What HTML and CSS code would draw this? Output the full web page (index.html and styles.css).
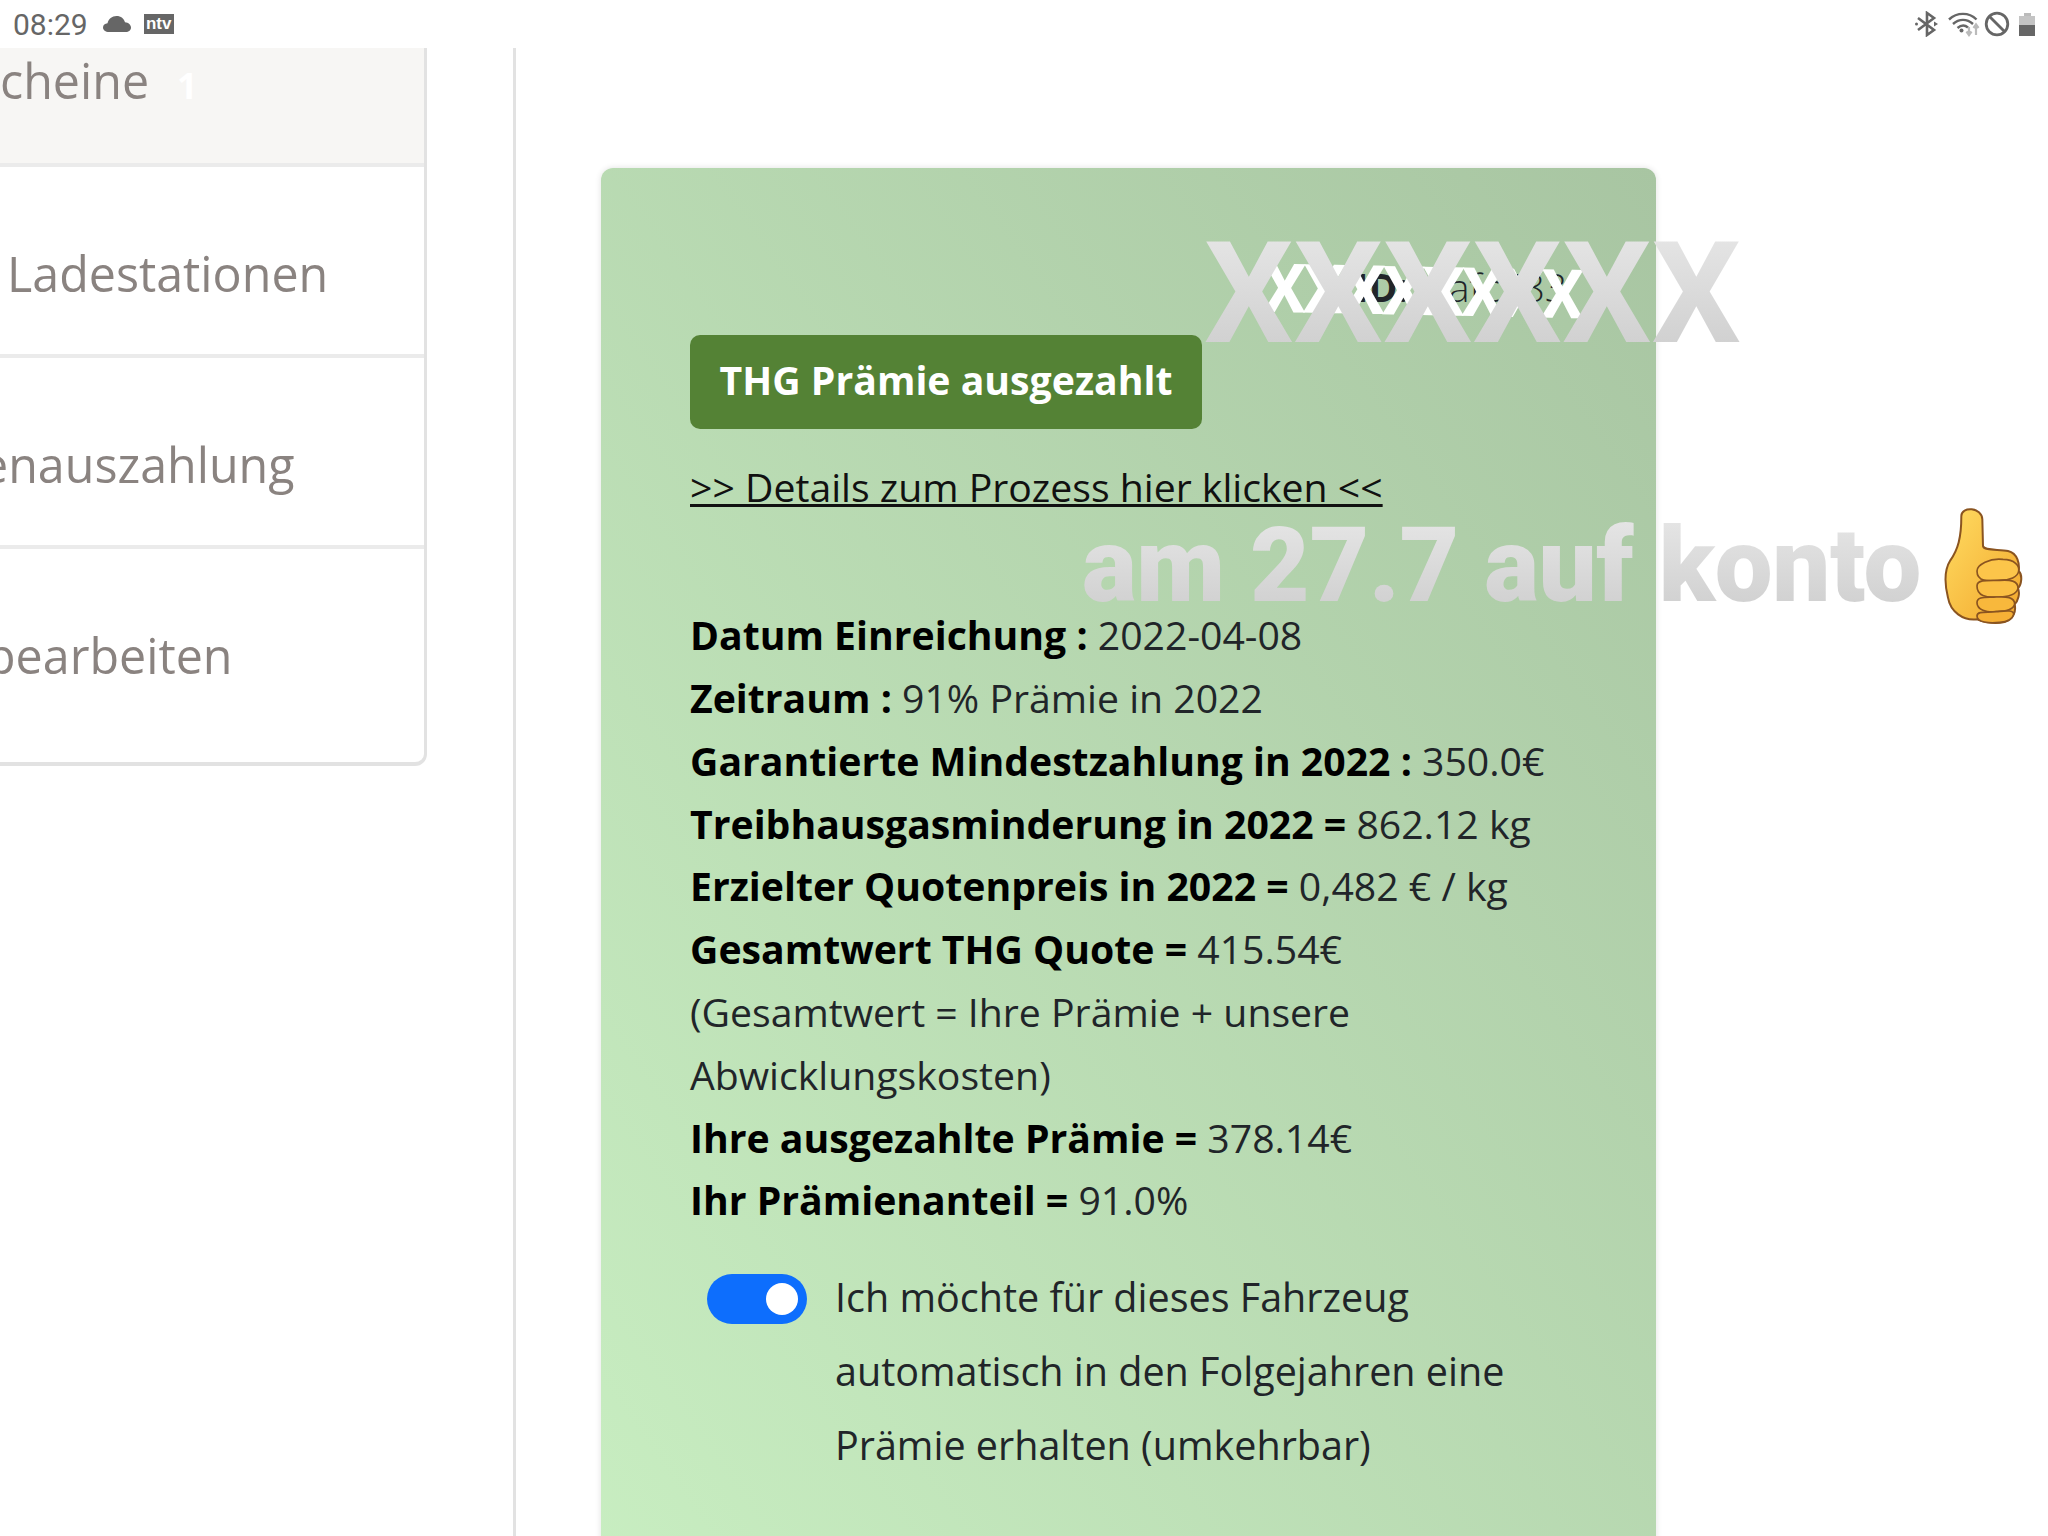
FILE: index.html
```html
<!DOCTYPE html>
<html>
<head>
    <title>THG Prämie</title>
    <link rel="stylesheet" href="styles.css">
</head>
<body>
    <div class="status-bar">
        <div class="status-left">
            <span class="clock">08:29</span>
            <svg class="cloud-icon" viewBox="0 0 28 16"><path d="M6 16C2.500 16 0 14 0 11.500S2 7.500 4.500 7.300C5.500 3 9 0 13.500 0 18 0 21 2.500 22 6.300 25.500 6.600 28 9 28 11.500S26 16 22.500 16Z"/></svg>
            <span class="ntv-badge">ntv</span>
        </div>
        <div class="status-right">
            <svg class="bt-icon" viewBox="0 0 24 26"><path d="M3 7 L19 19 L12 24 V2 L19 7 L3 19" fill="none" stroke="#666" stroke-width="2.600"/><circle cx="1.500" cy="13" r="1.500" fill="#666"/><path d="M19 10.500 L23 13 L19 15.500Z" fill="#666"/></svg>
            <svg class="wifi-icon" viewBox="0 0 32 26">
                <path d="M1 8.500C9 1 21 1 28.500 8.500M5 13C11 7.500 19 7.500 25 13M9.500 17C13 14 17 14 20 16.500" fill="none" stroke="#666" stroke-width="2.400"/>
                <circle cx="13.500" cy="19.500" r="2" fill="#666"/>
                <path d="M21 16V23M18.500 20.500L21 24L23.500 20.500M28 24V14M25.500 17L28 13.500L30.500 17" fill="none" stroke="#bbb" stroke-width="2.200"/>
            </svg>
            <svg class="dnd-icon" viewBox="0 0 26 26"><circle cx="13" cy="13" r="10.800" fill="none" stroke="#666" stroke-width="2.800"/><path d="M5.500 5.500L20.500 20.500" stroke="#666" stroke-width="2.800"/></svg>
            <div class="battery"><div class="battery-cap"></div><div class="battery-body"><div class="battery-level"></div></div></div>
        </div>
    </div>

    <div class="main">
        <div class="side-list">
            <div class="side-item side-item-active"><span class="side-text">cheine</span><span class="side-count">1</span></div>
            <div class="side-item"><span class="side-text side-text-in">Ladestationen</span></div>
            <div class="side-item"><span class="side-text side-text-out">enauszahlung</span></div>
            <div class="side-item side-item-last"><span class="side-text side-text-far">bearbeiten</span></div>
        </div>

        <div class="content">
            <div class="card">
                <div class="card-id"><b>ID:</b> afc583</div>
                <div class="sticker-small">XXXXXXXX</div>
                <div class="sticker-big">XXXXXX</div>

                <div class="status-btn">THG Prämie ausgezahlt</div>
                <a class="details-link" href="#">&gt;&gt; Details zum Prozess hier klicken &lt;&lt;</a>

                <div class="sticker-note">
                    <span class="sticker-note-text">am 27.7 auf konto</span>
                    <svg class="thumb" viewBox="70 45 240 360">
                        <defs>
                            <linearGradient id="thumbFill" x1="0" y1="0" x2="1" y2="1">
                                <stop offset="0" stop-color="#ffdc62"/>
                                <stop offset="1" stop-color="#f2a62b"/>
                            </linearGradient>
                        </defs>
                        <path d="M125 75C125 45 187 48 188 85L190 165C192 180 240 174 265 180 295 187 300 220 297 240 310 252 305 282 295 292 302 308 295 330 285 340 290 362 280 385 258 392 230 400 200 396 172 385 130 390 92 362 85 320 75 280 72 240 92 208 115 175 125 140 125 75Z" fill="url(#thumbFill)" stroke="#8a5420" stroke-width="6"/>
                        <path d="M172 240C172 222 210 200 250 205 285 205 300 225 297 240 295 258 270 268 240 268 210 270 172 275 172 240Z" fill="#fcc54a" stroke="#8a5420" stroke-width="5"/>
                        <path d="M172 285C172 265 205 268 240 268 270 266 296 268 295 292 290 312 260 318 230 318 200 320 172 315 172 285Z" fill="#fbc044" stroke="#8a5420" stroke-width="5"/>
                        <path d="M172 335C172 315 200 320 230 318 260 316 285 318 285 340 280 358 255 362 230 362 200 366 172 355 172 335Z" fill="#f8b83c" stroke="#8a5420" stroke-width="5"/>
                        <path d="M172 375C172 358 205 366 230 362 255 360 282 355 282 370 278 388 258 392 240 394 210 397 172 395 172 375Z" fill="#f6b036" stroke="#8a5420" stroke-width="5"/>
                    </svg>
                </div>

                <div class="details">
                    <div class="detail-row"><b>Datum Einreichung :</b> 2022-04-08</div>
                    <div class="detail-row"><b>Zeitraum :</b> 91% Prämie in 2022</div>
                    <div class="detail-row"><b>Garantierte Mindestzahlung in 2022 :</b> 350.0€</div>
                    <div class="detail-row"><b>Treibhausgasminderung in 2022 =</b> 862.12 kg</div>
                    <div class="detail-row"><b>Erzielter Quotenpreis in 2022 =</b> 0,482 € / kg</div>
                    <div class="detail-row"><b>Gesamtwert THG Quote =</b> 415.54€</div>
                    <div class="detail-row detail-note">(Gesamtwert = Ihre Prämie + unsere Abwicklungskosten)</div>
                    <div class="detail-row"><b>Ihre ausgezahlte Prämie =</b> 378.14€</div>
                    <div class="detail-row"><b>Ihr Prämienanteil =</b> 91.0%</div>
                </div>

                <div class="renew-row">
                    <div class="switch"><div class="switch-knob"></div></div>
                    <div class="renew-text">Ich möchte für dieses Fahrzeug automatisch in den Folgejahren eine Prämie erhalten (umkehrbar)</div>
                </div>
            </div>
        </div>
    </div>
</body>
</html>
```
FILE: styles.css
```css
body {
    margin: 0;
    width: 2048px;
    height: 1536px;
    overflow: hidden;
    background-color: white;
    font-family: "Open Sans", sans-serif;
    color: #212529;
}
.status-bar {
    height: 48px;
    display: flex;
    justify-content: space-between;
    align-items: center;
    padding: 0 13px;
    box-sizing: border-box;
}
.status-left, .status-right {
    display: flex;
    align-items: center;
}
.clock {
    font-family: Roboto, sans-serif;
    font-size: 30px;
    color: #666;
    margin-right: 15px;
}
.cloud-icon {
    width: 28px;
    height: 16px;
    fill: #666;
    margin-right: 13px;
}
.ntv-badge {
    width: 30px;
    height: 20px;
    background-color: #666;
    color: white;
    font-family: "Liberation Sans", sans-serif;
    font-weight: bold;
    font-size: 17px;
    line-height: 19px;
    text-align: center;
}
.bt-icon {
    width: 24px;
    height: 26px;
    margin-right: 9px;
}
.wifi-icon {
    width: 32px;
    height: 26px;
    margin-right: 4px;
}
.dnd-icon {
    width: 26px;
    height: 26px;
    margin-right: 9px;
}
.battery {
    width: 16px;
    display: flex;
    flex-direction: column;
    align-items: center;
}
.battery-cap {
    width: 7px;
    height: 3px;
    background-color: #bbb;
}
.battery-body {
    width: 16px;
    height: 20px;
    background-color: #c4c4c4;
    display: flex;
    align-items: flex-end;
}
.battery-level {
    width: 100%;
    height: 11px;
    background-color: #666;
}
.main {
    display: flex;
    height: 1488px;
}
.side-list {
    width: 427px;
    height: 718px;
    box-sizing: border-box;
    border-right: 3px solid #e2e2e2;
    border-bottom: 4px solid #e2e2e2;
    border-bottom-right-radius: 12px;
    overflow: hidden;
    flex-shrink: 0;
}
.side-item {
    height: 191px;
    box-sizing: border-box;
    border-bottom: 4px solid #ebebeb;
    padding-top: 73px;
    font-size: 48.400px;
    line-height: 66px;
    color: #8a8380;
    white-space: nowrap;
}
.side-item-active {
    height: 119px;
    padding-top: 0;
    line-height: 64px;
    background-color: #f7f6f4;
}
.side-item-last {
    border-bottom: none;
    height: 215px;
}
.side-text {
    display: inline-block;
}
.side-text-in {
    margin-left: 7px;
}
.side-text-out {
    margin-left: -19px;
}
.side-text-far {
    margin-left: -14px;
}
.side-count {
    color: white;
    font-weight: bold;
    font-size: 36px;
    margin-left: 28px;
}
.content {
    margin-left: 86px;
    padding-left: 85px;
    border-left: 3px solid #e2e2e2;
    flex: 1;
}
.card {
    position: relative;
    width: 1055px;
    height: 1500px;
    margin-top: 120px;
    box-sizing: border-box;
    padding: 88px 89px 0;
    border-radius: 12px;
    background: linear-gradient(to bottom left, #a8c5a2, #c9efc2);
    box-shadow: 0 0 6px rgba(0,0,0,0.12);
    font-size: 39.200px;
    line-height: 62.800px;
}
.card-id {
    height: 79px;
    text-align: right;
    font-weight: 300;
}
.card-id b {
    font-weight: bold;
    margin-right: 30px;
}
.sticker-small {
    position: absolute;
    left: 662px;
    top: 84px;
    font-family: Roboto, sans-serif;
    font-weight: bold;
    font-size: 68px;
    line-height: 80px;
    color: white;
    letter-spacing: -3.500px;
    white-space: nowrap;
    transform: rotate(1.200deg);
}
.sticker-big, .sticker-note-text {
    font-family: Roboto, sans-serif;
    font-weight: 900;
    color: transparent;
    background: linear-gradient(#e8e8e8, #cccccc);
    -webkit-background-clip: text;
    background-clip: text;
    white-space: nowrap;
}
.sticker-big {
    position: absolute;
    left: 603px;
    top: 51px;
    font-weight: 700;
    font-size: 141px;
    line-height: 150px;
}
.status-btn {
    width: 512px;
    height: 94px;
    box-sizing: border-box;
    border-radius: 10px;
    background-color: #548235;
    color: white;
    font-weight: bold;
    text-align: center;
    line-height: 90px;
}
.details-link {
    display: block;
    margin-top: 27px;
    color: #111;
    text-decoration: underline;
}
.sticker-note {
    position: absolute;
    left: 481px;
    top: 338px;
    display: flex;
    align-items: center;
    gap: 22px;
}
.sticker-note-text {
    font-size: 103px;
    line-height: 120px;
    letter-spacing: -0.350px;
}
.thumb {
    width: 80px;
    height: 120px;
}
.details {
    margin-top: 85.400px;
}
.detail-row b {
    color: black;
}
.renew-row {
    display: flex;
    margin-top: 27.500px;
    padding-left: 17px;
    align-items: flex-start;
}
.switch {
    width: 100px;
    height: 50px;
    margin-top: 14px;
    flex-shrink: 0;
    border-radius: 25px;
    background-color: #0d6efd;
    display: flex;
    align-items: center;
    justify-content: flex-end;
    padding-right: 9px;
    box-sizing: border-box;
}
.switch-knob {
    width: 32px;
    height: 32px;
    border-radius: 50%;
    background-color: white;
}
.renew-text {
    margin-left: 28px;
    font-size: 39.500px;
    line-height: 74px;
}
```
